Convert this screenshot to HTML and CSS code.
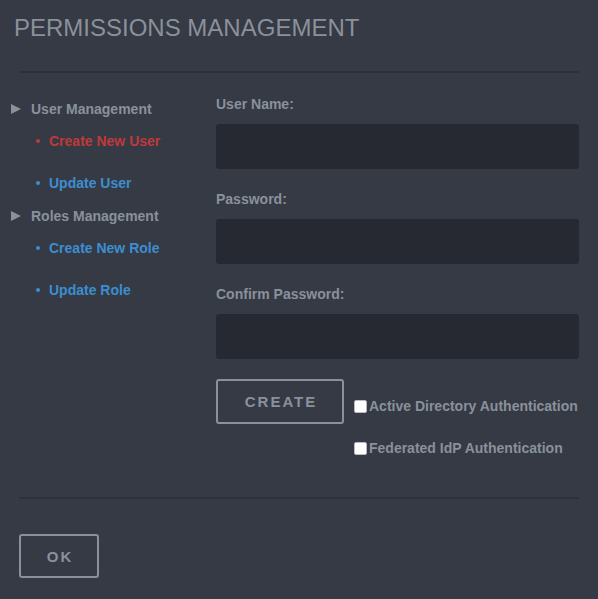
FILE: index.html
```html
<!DOCTYPE html>
<html>
<head>
<meta charset="utf-8">
<title>Permissions Management</title>
<link rel="stylesheet" href="styles.css">
</head>
<body>
<div class="dialog">
  <h1 class="title">PERMISSIONS MANAGEMENT</h1>
  <hr class="divider divider-top">
  <div class="content">
    <nav class="nav">
      <div class="group">
        <div class="group-head"><span class="tri"></span>User Management</div>
        <ul class="items">
          <li class="active">Create New User</li>
          <li>Update User</li>
        </ul>
      </div>
      <div class="group">
        <div class="group-head"><span class="tri"></span>Roles Management</div>
        <ul class="items">
          <li>Create New Role</li>
          <li>Update Role</li>
        </ul>
      </div>
    </nav>
    <form class="form">
      <label class="field-label">User Name:</label>
      <input class="field" type="text">
      <label class="field-label">Password:</label>
      <input class="field" type="password">
      <label class="field-label">Confirm Password:</label>
      <input class="field" type="password">
      <div class="actions">
        <button type="button" class="btn btn-create">CREATE</button>
        <div class="checks">
          <label class="check"><input type="checkbox"><span>Active Directory Authentication</span></label>
          <label class="check"><input type="checkbox"><span>Federated IdP Authentication</span></label>
        </div>
      </div>
    </form>
  </div>
  <hr class="divider divider-bottom">
  <div class="footer">
    <button type="button" class="btn btn-ok">OK</button>
  </div>
</div>
</body>
</html>
```
FILE: styles.css
```css
html, body {
  margin: 0;
  padding: 0;
}
body {
  background: #353a44;
  font-family: "Liberation Sans", Arial, sans-serif;
  color: #8a919b;
  width: 598px;
  height: 599px;
  overflow: hidden;
}
.title {
  margin: 0;
  padding: 14px 14px 0;
  font-size: 24px;
  font-weight: 400;
  line-height: 28px;
  color: #8a919b;
}
.divider {
  border: 0;
  border-top: 2px solid #2d3139;
  height: 0;
  margin: 0 19px;
}
.divider-top {
  margin-top: 29px;
}
.divider-bottom {
  margin-top: 39px;
}
.content {
  display: grid;
  grid-template-columns: 216px 363px;
}
.nav {
  padding-top: 26px;
}
.group-head {
  display: flex;
  align-items: center;
  padding-left: 11px;
  font-weight: 700;
  font-size: 14px;
  line-height: 20px;
  color: #8a919b;
}
.tri {
  width: 0;
  height: 0;
  border-left: 10px solid #8a919b;
  border-top: 5px solid transparent;
  border-bottom: 5px solid transparent;
  margin-right: 10px;
}
.items {
  list-style: none;
  margin: 12px 0 13px;
  padding: 0 0 0 36px;
}
.items li {
  display: flex;
  align-items: center;
  font-weight: 700;
  font-size: 14px;
  line-height: 20px;
  color: #3d8ed0;
}
.items li + li {
  margin-top: 22px;
}
.items li::before {
  content: "";
  width: 4px;
  height: 4px;
  border-radius: 50%;
  background: currentColor;
  margin-right: 9px;
}
.items li.active {
  color: #c0393b;
}
.form {
  display: flex;
  flex-direction: column;
  padding-top: 20px;
}
.field-label {
  font-weight: 700;
  font-size: 14px;
  line-height: 20px;
  color: #8a919b;
  padding-top: 1px;
  margin-bottom: 10px;
}
.field {
  box-sizing: border-box;
  width: 100%;
  height: 45px;
  border: none;
  border-radius: 3px;
  background: #262931;
  margin: 0 0 19px;
  padding: 0 10px;
  color: #c8cdd4;
  outline: none;
}
.actions {
  display: flex;
  align-items: flex-start;
  margin-top: 1px;
}
.btn {
  box-sizing: border-box;
  border: 2px solid #8a919b;
  border-radius: 3px;
  background: transparent;
  color: #8a919b;
  font-family: "Liberation Sans", Arial, sans-serif;
  font-weight: 700;
  font-size: 15px;
  letter-spacing: 2px;
  text-indent: 2px;
  padding: 0;
}
.btn-create {
  width: 128px;
  height: 45px;
}
.checks {
  display: flex;
  flex-direction: column;
  gap: 22px;
  margin-left: 10px;
  padding-top: 17px;
}
.check {
  display: flex;
  align-items: center;
  gap: 2px;
  font-weight: 700;
  font-size: 14px;
  line-height: 20px;
  color: #8a919b;
}
.check input {
  appearance: none;
  -webkit-appearance: none;
  margin: 0;
  width: 13px;
  height: 13px;
  background: #ffffff;
  border: 1px solid #b9bcc2;
  border-radius: 2px;
  box-sizing: border-box;
}
.footer {
  padding: 35px 19px 0;
}
.btn-ok {
  width: 80px;
  height: 44px;
}
```
